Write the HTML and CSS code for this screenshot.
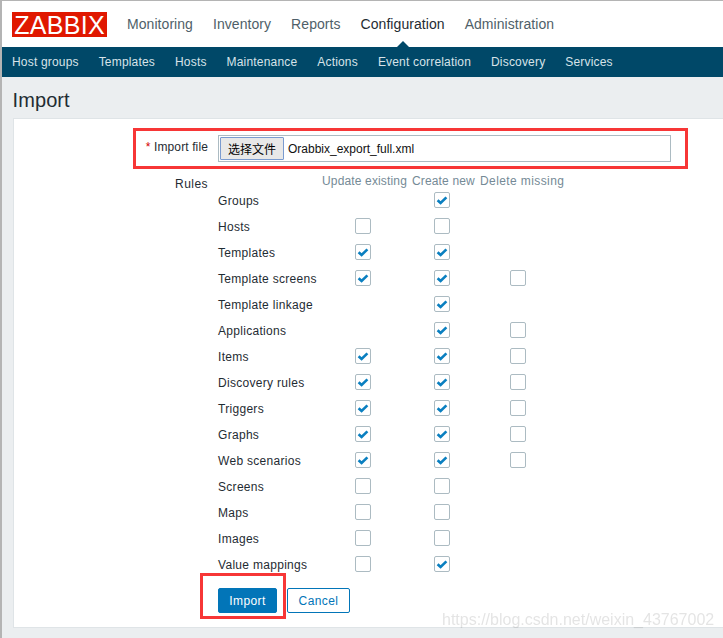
FILE: index.html
```html
<!DOCTYPE html>
<html lang="en">
<head>
<meta charset="utf-8">
<title>Import</title>
<link rel="stylesheet" href="styles.css">
</head>
<body>
<svg class="defs" width="0" height="0"><symbol id="tick" viewBox="0 0 16 16"><path d="M3.6 8.2 L6.6 11 L12.4 5.4" fill="none" stroke="#0a7fc0" stroke-width="2.6"/></symbol></svg>
<header class="topbar">
  <div class="logo">ZABBIX</div>
  <nav class="mainnav">
    <a>Monitoring</a><a>Inventory</a><a>Reports</a><a class="active">Configuration</a><a>Administration</a>
  </nav>
</header>
<nav class="subnav">
  <a>Host groups</a><a>Templates</a><a>Hosts</a><a>Maintenance</a><a>Actions</a><a>Event correlation</a><a>Discovery</a><a>Services</a>
</nav>
<main class="content">
  <h1 class="title">Import</h1>
  <section class="panel">
    <div class="file-row">
      <label class="label file-label"><span class="req">*</span> Import file</label>
      <div class="file-box"><button class="file-btn">选择文件</button><span class="file-name">Orabbix_export_full.xml</span></div>
    </div>
    <div class="rules">
      <div class="label rules-label">Rules</div>
      <div class="rules-grid">
        <div></div><div class="head">Update existing</div><div class="head">Create new</div><div class="head head-wide">Delete missing</div>

        <div class="name">Groups</div><div class="c1"></div><div class="c2"><span class="cb"><svg><use href="#tick"/></svg></span></div><div class="c3"></div>
        <div class="name">Hosts</div><div class="c1"><span class="cb"></span></div><div class="c2"><span class="cb"></span></div><div class="c3"></div>
        <div class="name">Templates</div><div class="c1"><span class="cb"><svg><use href="#tick"/></svg></span></div><div class="c2"><span class="cb"><svg><use href="#tick"/></svg></span></div><div class="c3"></div>
        <div class="name">Template screens</div><div class="c1"><span class="cb"><svg><use href="#tick"/></svg></span></div><div class="c2"><span class="cb"><svg><use href="#tick"/></svg></span></div><div class="c3"><span class="cb"></span></div>
        <div class="name">Template linkage</div><div class="c1"></div><div class="c2"><span class="cb"><svg><use href="#tick"/></svg></span></div><div class="c3"></div>
        <div class="name">Applications</div><div class="c1"></div><div class="c2"><span class="cb"><svg><use href="#tick"/></svg></span></div><div class="c3"><span class="cb"></span></div>
        <div class="name">Items</div><div class="c1"><span class="cb"><svg><use href="#tick"/></svg></span></div><div class="c2"><span class="cb"><svg><use href="#tick"/></svg></span></div><div class="c3"><span class="cb"></span></div>
        <div class="name">Discovery rules</div><div class="c1"><span class="cb"><svg><use href="#tick"/></svg></span></div><div class="c2"><span class="cb"><svg><use href="#tick"/></svg></span></div><div class="c3"><span class="cb"></span></div>
        <div class="name">Triggers</div><div class="c1"><span class="cb"><svg><use href="#tick"/></svg></span></div><div class="c2"><span class="cb"><svg><use href="#tick"/></svg></span></div><div class="c3"><span class="cb"></span></div>
        <div class="name">Graphs</div><div class="c1"><span class="cb"><svg><use href="#tick"/></svg></span></div><div class="c2"><span class="cb"><svg><use href="#tick"/></svg></span></div><div class="c3"><span class="cb"></span></div>
        <div class="name">Web scenarios</div><div class="c1"><span class="cb"><svg><use href="#tick"/></svg></span></div><div class="c2"><span class="cb"><svg><use href="#tick"/></svg></span></div><div class="c3"><span class="cb"></span></div>
        <div class="name">Screens</div><div class="c1"><span class="cb"></span></div><div class="c2"><span class="cb"></span></div><div class="c3"></div>
        <div class="name">Maps</div><div class="c1"><span class="cb"></span></div><div class="c2"><span class="cb"></span></div><div class="c3"></div>
        <div class="name">Images</div><div class="c1"><span class="cb"></span></div><div class="c2"><span class="cb"></span></div><div class="c3"></div>
        <div class="name">Value mappings</div><div class="c1"><span class="cb"></span></div><div class="c2"><span class="cb"><svg><use href="#tick"/></svg></span></div><div class="c3"></div>
      </div>
    </div>
    <div class="actions">
      <button class="btn primary">Import</button><button class="btn secondary">Cancel</button>
    </div>
  </section>
</main>
<div class="mark mark-file"></div>
<div class="mark mark-import"></div>
<div class="watermark">https://blog.csdn.net/weixin_43767002</div>
</body>
</html>
```

FILE: styles.css
```css
* { box-sizing: border-box; }
html, body { margin: 0; height: 100%; }
body {
  position: relative;
  width: 723px;
  height: 638px;
  overflow: hidden;
  font-family: "Liberation Sans", Arial, sans-serif;
  font-size: 12px;
  color: #1f2c33;
  background: #ebeef0;
  border-top: 1px solid #b4b4b4;
  border-left: 2px solid #b4b4b4;
}
.defs { position: absolute; }

.topbar {
  height: 46px;
  background: #fff;
  display: flex;
  align-items: flex-start;
  padding: 11px 0 0 10px;
}
.logo {
  width: 95px;
  height: 25px;
  background: #e01800;
  color: #fff;
  font-size: 25px;
  line-height: 26px;
  letter-spacing: 0.3px;
  text-align: center;
  white-space: nowrap;
}
.mainnav {
  display: flex;
  gap: 20px;
  margin-left: 20px;
  font-size: 14px;
  line-height: 24px;
  letter-spacing: 0.06px;
  color: #4f5f69;
}
.mainnav .active { color: #1f2c33; position: relative; }
.mainnav .active::after {
  content: "";
  position: absolute;
  left: 50%;
  margin-left: -6px;
  top: 29px;
  border: 6px solid transparent;
  border-top: 0;
  border-bottom-color: #004868;
}

.subnav {
  height: 30px;
  background: #004868;
  color: #d7e3e9;
  display: flex;
  align-items: center;
  gap: 20px;
  padding-left: 10px;
  font-size: 12px;
  letter-spacing: 0.18px;
}

.content { padding: 0 0 0 11px; }
.title {
  margin: 0;
  height: 41px;
  font-size: 20px;
  font-weight: 400;
  line-height: 46px;
  letter-spacing: 0.1px;
  color: #1f2c33;
  text-indent: -0.5px;
}
.panel {
  height: 510px;
  background: #fff;
  border-top: 1px solid #dfe4e7;
  border-left: 1px solid #dfe4e7;
  border-bottom: 1px solid #dfe4e7;
  padding-top: 16px;
  letter-spacing: 0.3px;
}
.file-row { display: flex; align-items: flex-start; height: 27px; }
.label { width: 194px; text-align: right; flex: none; line-height: 22px; }
.file-label { line-height: 24px; letter-spacing: 0.12px; }
.req { color: #d40000; }
.file-box {
  margin-left: 10px;
  width: 453px;
  height: 27px;
  border: 1px solid #acbbc2;
  display: flex;
  align-items: center;
  padding-left: 1px;
  background: #fff;
}
.file-btn {
  width: 64px;
  height: 23px;
  padding: 0;
  border: 1px solid #7a9bd0;
  border-radius: 1px;
  background: #e8e8e8;
  color: #000;
  font-family: "Noto Sans CJK SC", "Liberation Sans", sans-serif;
  font-size: 12px;
  line-height: 20px;
}
.file-name { margin-left: 4px; color: #111; letter-spacing: 0; font-size: 12px; }

.rules { display: flex; margin-top: 12px; }
.rules-label { line-height: 20px; letter-spacing: 0.45px; }
.rules-grid {
  margin-left: 10px;
  display: grid;
  grid-template-columns: 104px 90px 68px 84px;
  grid-template-rows: 13px repeat(15, 26px);
  align-items: center;
}
.head { color: #758a96; line-height: 12px; white-space: nowrap; letter-spacing: 0.15px; }
.head-wide { letter-spacing: 0.4px; }
.name { height: 26px; padding-top: 2px; line-height: 24px; white-space: nowrap; }
.c1, .c2, .c3 { height: 26px; display: flex; align-items: center; }
.c1 { padding-left: 33px; }
.c2 { padding-left: 22px; }
.c3 { padding-left: 30px; }
.cb {
  display: block;
  width: 16px;
  height: 16px;
  border: 1px solid #acbbc2;
  border-radius: 2px;
  background: #fff;
  position: relative;
}
.cb svg { position: absolute; left: -1px; top: -1px; width: 16px; height: 16px; }

.actions { display: flex; gap: 10px; margin: 11px 0 0 204px; }
.btn {
  height: 25px;
  border-radius: 2px;
  font-family: inherit;
  font-size: 12px;
  letter-spacing: 0.4px;
  padding: 0;
}
.primary { width: 59px; background: #0275b8; border: 1px solid #0275b8; color: #fff; }
.secondary { width: 63px; background: #fff; border: 1px solid #0275b8; color: #0275b8; }

.mark { position: absolute; border: 3px solid #f73636; }
.mark-file { left: 131px; top: 127px; width: 555px; height: 41px; }
.mark-import { left: 198px; top: 572px; width: 86px; height: 46px; }
.watermark {
  position: absolute;
  left: 440px;
  top: 609px;
  font-size: 16px;
  line-height: 20px;
  color: rgba(120, 120, 120, 0.2);
  filter: blur(0.4px);
  white-space: nowrap;
}
```
